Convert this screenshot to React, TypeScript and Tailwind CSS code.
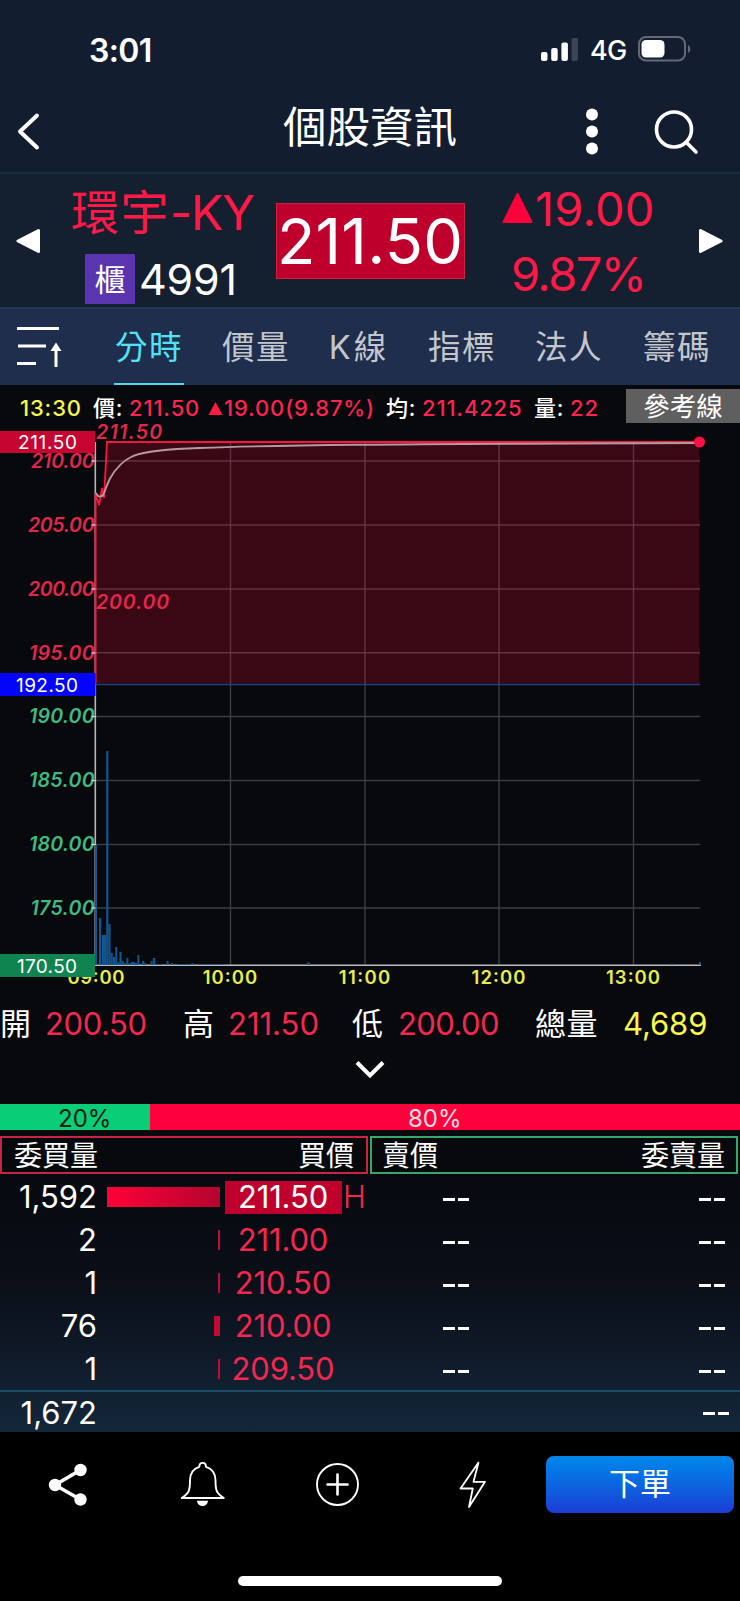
import { clsx } from "clsx";

const TABS = [
  { label: "分時", cell: "tracking-[1.5px]" },
  { label: "價量", cell: "ml-[37px] tracking-[1.5px]" },
  { label: "K線", cell: "ml-[33px] tracking-[3px]" },
  { label: "指標", cell: "ml-[33px] tracking-[1.5px]" },
  { label: "法人", cell: "ml-[37px] tracking-[1.5px]" },
  { label: "籌碼", cell: "ml-[38px] tracking-[1.5px]" },
];

const PRICE_TICKS = [
  { value: "210.00", y: 461, up: true, width: 64 },
  { value: "205.00", y: 525, up: true, width: 67 },
  { value: "200.00", y: 589, up: true, width: 67 },
  { value: "195.00", y: 653, up: true, width: 66 },
  { value: "190.00", y: 716.5, up: false, width: 66 },
  { value: "185.00", y: 780.5, up: false, width: 66 },
  { value: "180.00", y: 844.5, up: false, width: 66 },
  { value: "175.00", y: 908, up: false, width: 64.5 },
];

const TIME_TICKS = [
  { value: "09:00", x: 96, width: 57 },
  { value: "10:00", x: 230, width: 54.5 },
  { value: "11:00", x: 364.5, width: 51.5 },
  { value: "12:00", x: 498.5, width: 54 },
  { value: "13:00", x: 633, width: 54 },
];

// [x, width, top]
const VOLUME = [
  [95, 2, 845],
  [99, 2.2, 918],
  [101.8, 4.4, 935],
  [106.2, 2.2, 751],
  [108.4, 2.2, 924],
  [110.6, 2.2, 953],
  [113, 2, 957],
  [115.2, 2, 947],
  [117.4, 2, 962],
  [119.4, 2.2, 952],
  [121.8, 2, 961],
  [124.2, 2, 963],
  [126.4, 2, 958],
  [129, 1.6, 963],
  [131, 4, 962],
  [135, 2, 963],
  [137.4, 2, 955],
  [142, 2.2, 961],
  [144.2, 2, 963],
  [150.6, 2, 961],
  [152.8, 2.4, 958],
  [156, 6, 964],
  [166.6, 2, 961],
  [171, 2, 963],
  [177, 14, 964],
  [191.4, 2, 963],
  [198, 26, 964.4],
  [307, 3, 962.5],
  [671, 2, 963.5],
  [699, 2, 962],
];

const BIDS = [
  { qty: "1,592", price: "211.50", bar: "w-[113px]", last: true },
  { qty: "2", price: "211.00", bar: "w-[2px]" },
  { qty: "1", price: "210.50", bar: "w-[2px]" },
  { qty: "76", price: "210.00", bar: "w-[6px]" },
  { qty: "1", price: "209.50", bar: "w-[2px]" },
];

function StatusBar() {
  return (
    <div className="flex h-[98px] items-center pl-[89px]">
      <span className="w-[452px] pt-[3px] text-[32px] leading-none font-semibold tracking-[-0.6px]">3:01</span>
      <svg className="h-[26px] w-[38px]" viewBox="0 0 38 26" fill="#fff">
        <rect x="0" y="16" width="6.5" height="9" rx="2" />
        <rect x="10.2" y="12" width="6.5" height="13" rx="2" />
        <rect x="20.400" y="6.500" width="6.500" height="18.500" rx="2" />
        <rect x="30.500" y="2" width="6.500" height="23" rx="2" fill="#3b4556" />
      </svg>
      <span className="ml-[11px] w-[48px] pt-[3px] text-[27px] leading-none font-medium tracking-[-0.8px]">4G</span>
      <svg className="h-[26px] w-[54px]" viewBox="0 0 54 26">
        <rect x="1" y="1" width="46" height="23.5" rx="7" fill="none" stroke="#626a78" strokeWidth="2" />
        <rect x="3.5" y="4" width="23" height="17.5" rx="4.5" fill="#fff" />
        <path d="M50 9c3 1.300 3 6.700 0 8z" fill="#626a78" />
      </svg>
    </div>
  );
}

function TitleBar() {
  return (
    <header className="flex h-[76px] items-center border-b-2 border-[#12303f] pb-[9px]">
      <svg className="ml-[14px] h-[44px] w-[30px]" viewBox="0 0 30 44" fill="none" stroke="#fff" strokeWidth="4" strokeLinecap="round" strokeLinejoin="round">
        <path d="M23 6.500 6 22.500 23 38.500" />
      </svg>
      <h1 className="ml-[239px] w-[179px] pb-[5px] text-[43.5px] leading-none">個股資訊</h1>
      <svg className="ml-[124px] h-[50px] w-[12px]" viewBox="0 0 12 50" fill="#fff">
        <circle cx="6" cy="8.500" r="6" />
        <circle cx="6" cy="25.500" r="6" />
        <circle cx="6" cy="42.500" r="6" />
      </svg>
      <svg className="ml-[55px] h-[48px] w-[48px]" viewBox="0 0 48 48" fill="none" stroke="#fff" strokeWidth="3.6" strokeLinecap="round">
        <circle cx="21" cy="22.500" r="17.500" />
        <path d="M33.500 35.500 43 45" />
      </svg>
    </header>
  );
}

function StockHeader() {
  return (
    <section className="flex h-[133px] bg-[#141f30] text-[#ff1945]">
      <svg className="mt-[54px] ml-[16px] h-[26px] w-[25px]" viewBox="0 0 25 26" fill="#fff" stroke="#fff" strokeWidth="3" strokeLinejoin="round">
        <path d="M2 13 22.500 2.500V23.500z" />
      </svg>
      <div className="ml-[29px] w-[206px]">
        <div className="mt-[13px] h-[54px] pl-[1px] text-[48px] leading-[52px] tracking-[1.500px] whitespace-nowrap">
          環宇<span className="tracking-[-1px]">-KY</span>
        </div>
        <div className="mt-[13px] flex items-center pl-[15px] text-white">
          <span className="flex size-[50px] items-center justify-center bg-[#5b34b0] text-[31px] leading-none">櫃</span>
          <span className="ml-[4px] text-[43px] leading-[50px] tracking-[-0.2px]">4991</span>
        </div>
      </div>
      <div className="mt-[29px] flex h-[76px] w-[189px] items-center justify-center border border-[#d02040] bg-[#c0002c] pr-[1px] text-[63px] leading-none tracking-[0.2px] text-white">
        211.50
      </div>
      <div className="ml-[37px] flex w-[160px] flex-col">
        <div className="mt-[6px] flex h-[56px] items-center">
          <svg className="mr-[2px] h-[32px] w-[31px]" viewBox="0 0 31 32" fill="#ff003c" stroke="#ff003c" strokeWidth="2" strokeLinejoin="round">
            <path d="M15.500 2 29.500 30h-28z" />
          </svg>
          <span className="text-[47px] leading-none tracking-[0.2px]">19.00</span>
        </div>
        <div className="mt-[10px] pl-[9px] text-[47px] leading-[56px] tracking-[-1.6px]">9.87%</div>
      </div>
      <svg className="mt-[54px] ml-[36px] h-[26px] w-[25px]" viewBox="0 0 25 26" fill="#fff" stroke="#fff" strokeWidth="3" strokeLinejoin="round">
        <path d="M23 13 2.500 2.500V23.500z" />
      </svg>
    </section>
  );
}

function Tabs() {
  return (
    <nav className="flex h-[78px] border-t-2 border-[#193a55] bg-[#202e4d]">
      <svg className="mt-[14px] ml-[16px] h-[48px] w-[48px]" viewBox="0 0 48 48" fill="none" stroke="#fff" strokeWidth="3">
        <path d="M1 5.500h42M2 23h28M1 40.500h19M40 44V26" />
        <path d="M40 19.500 34.500 28h11z" fill="#fff" stroke="none" />
      </svg>
      <ul className="ml-[50px] flex">
        {TABS.map((tab, i) => (
          <li
            key={tab.label}
            className={clsx(
              "flex h-[76px] w-[70px] items-center justify-center border-b-2 pt-[4px] text-[32.5px] whitespace-nowrap",
              tab.cell,
              i === 0 ? "border-[#56d8f2] text-[#4fe3f5]" : "border-transparent text-[#c3c7cc]",
            )}
          >
            {tab.label}
          </li>
        ))}
      </ul>
    </nav>
  );
}

function QuoteLine() {
  return (
    <div className="flex h-[40px] items-start text-[22px] leading-[30px] font-medium tracking-[0.85px] whitespace-nowrap text-[#ff2350]">
      <span className="mt-[8px] ml-[20px] w-[73px] text-[#f4f84a]">13:30</span>
      <span className="mt-[8px] w-[36px] text-white">價:</span>
      <span className="mt-[8px] w-[79px]">211.50</span>
      <svg className="mt-[16px] h-[15px] w-[15px]" viewBox="0 0 15 15" fill="#ff1945">
        <path d="M7.500 1 14.500 14H.5z" />
      </svg>
      <span className="mt-[8px] ml-[1px] w-[162px]">19.00(9.87%)</span>
      <span className="mt-[8px] w-[36px] text-white">均:</span>
      <span className="mt-[8px] w-[112px]">211.4225</span>
      <span className="mt-[8px] w-[36px] text-white">量:</span>
      <span className="mt-[8px]">22</span>
      <button className="mt-[4px] ml-auto h-[34px] w-[114px] bg-[#5f5f60] text-[26.500px] leading-[33px] font-normal tracking-normal text-white">
        參考線
      </button>
    </div>
  );
}

function Chart() {
  return (
    <svg className="block h-[567px] w-[740px] overflow-visible" viewBox="0 425 740 567" fontSize="19.500">
      <path d="M95.500 683.500V493l3.500 12 3-17 2 10 3-56h592.500v241.500z" fill="#3a0715" />
      <path
        d="M95.500 461H700M95.500 525H700M95.500 589H700M95.500 652.800H700M230.500 442V684M365 442V684M499 442V684M633.500 442V684"
        stroke="#603541"
        strokeWidth="1.400"
      />
      <path
        d="M95.500 716.500H700M95.500 780.500H700M95.500 844.500H700M95.500 908H700M230.500 684V965M365 684V965M499 684V965M633.500 684V965"
        stroke="#3c3e42"
        strokeWidth="1.400"
      />
      <path d="M95.500 965.300H701" stroke="#b9bcc0" strokeWidth="1.400" />
      <path d="M95.300 442V966" stroke="#b5b5b7" strokeWidth="1.600" />
      {VOLUME.map(([x, w, top]) => (
        <rect key={x} x={x} y={top} width={w} height={965 - top} fill="#12568f" />
      ))}
      <path d="M95.500 684.500H700" stroke="#213f80" strokeWidth="1.500" />
      <path d="M95.500 683V493l3.500 12 3-17 2 10 3-56h592" fill="none" stroke="#ff1440" strokeWidth="1.800" />
      <path
        d="M95.500 493c2 1 2 3.500 4 3.500s3 0 4-2c2-5 3-9 6.500-16 5-9 11-17 23-22.500 14-5.500 40-7.300 67-8 80-3 170-4 499.500-5"
        fill="none"
        stroke="#b59a9f"
        strokeWidth="1.900"
      />
      <circle cx="699.500" cy="442" r="5.500" fill="#ff0f42" />

      {PRICE_TICKS.map((tick) => (
        <g key={tick.value}>
          <text
            x={95 - tick.width}
            y={tick.y + 6.8}
            textLength={tick.width - 0.5}
            fontStyle="italic"
            fontWeight="600"
            fill={tick.up ? "#e3264c" : "#3fb981"}
          >
            {tick.value}
          </text>
          <path d={`M91.500 ${tick.y}h4`} stroke="#d8d8d8" strokeWidth="1.200" />
        </g>
      ))}
      <g fontStyle="italic" fontWeight="600" fill="#e3264c">
        <text x="96" y="439" textLength="66">211.50</text>
        <text x="96" y="608.500" textLength="73">200.00</text>
      </g>

      <g fontWeight="600" fill="#e6ed4e">
        {TIME_TICKS.map((tick) => (
          <text key={tick.value} x={tick.x - tick.width / 2} y="983.500" textLength={tick.width} fontSize="18.500">
            {tick.value}
          </text>
        ))}
      </g>

      <path d="M0 431H95V453H0z" fill="#c50631" />
      <path d="M0 673H95.500V696H0z" fill="#0404fb" />
      <path d="M0 954H95V977H0z" fill="#0f8450" />
      <g fill="#fff" fontSize="19">
        <text x="18" y="449.300" textLength="59">211.50</text>
        <text x="16" y="691.800" textLength="62">192.50</text>
        <text x="17" y="972.800" textLength="60">170.50</text>
      </g>
    </svg>
  );
}

function DayStats() {
  return (
    <div className="flex h-[62px] items-center text-[31px] leading-none tracking-[-0.4px] whitespace-nowrap text-[#f32750]">
      <span className="w-[45px] text-white">開</span>
      <span className="w-[138px]">200.50</span>
      <span className="w-[45px] text-white">高</span>
      <span className="w-[124px] tracking-normal">211.50</span>
      <span className="w-[46px] text-white">低</span>
      <span className="w-[137px] tracking-[-0.6px]">200.00</span>
      <span className="w-[88px] tracking-[0.5px] text-white">總量</span>
      <span className="tracking-[-0.1px] text-[#fbf74b]">4,689</span>
    </div>
  );
}

function OrderBook() {
  return (
    <section className="flex h-[258px] flex-col bg-linear-to-b from-[#07090f] via-[#0a0e17] via-40% to-[#13273a] text-[31px] leading-none">
      <div className="h-[2px]" />
      {BIDS.map((bid) => (
        <div key={bid.price} className="flex h-[42.8px] items-center">
          <span className="w-[97px] pb-[1px] text-right">{bid.qty}</span>
          <span className="flex w-[122.500px] justify-end">
            <span
              className={clsx(
                "h-[20px]",
                bid.bar,
                bid.last ? "bg-linear-to-r from-[#ff0038] to-[#b5042d]" : "bg-[#c20a33]",
              )}
            />
          </span>
          <span
            className={clsx(
              "ml-[5.500px] flex h-[33px] w-[117px] items-center justify-center pr-[1px] pb-[1px] tracking-[-0.15px]",
              bid.last ? "bg-[#c0002c] text-white" : "text-[#f32750]",
            )}
          >
            {bid.price}
          </span>
          <span className="w-[101px] pb-[1px] pl-[1px] font-light text-[#f32750]">{bid.last ? "H" : ""}</span>
          <span className="flex gap-[3px] pt-[5px]">
            <i className="h-[3px] w-[11.500px] bg-white" />
            <i className="h-[3px] w-[11.500px] bg-white" />
          </span>
          <span className="ml-auto flex gap-[3px] pt-[5px] pr-[15px]">
            <i className="h-[3px] w-[11.500px] bg-white" />
            <i className="h-[3px] w-[11.500px] bg-white" />
          </span>
        </div>
      ))}
      <div className="flex flex-1 items-center border-t-2 border-[#1c4b66]">
        <span className="w-[97px] pt-[1px] text-right">1,672</span>
        <span className="ml-auto flex gap-[3px] pt-[4px] pr-[11px]">
          <i className="h-[3px] w-[11.500px] bg-white" />
          <i className="h-[3px] w-[11.500px] bg-white" />
        </span>
      </div>
    </section>
  );
}

function BottomBar() {
  return (
    <footer className="flex h-[169px] flex-col bg-black">
      <div className="flex h-[105px] items-center">
        <svg className="ml-[46px] h-[50px] w-[44px]" viewBox="0 0 44 50" fill="#fff">
          <path d="M34.500 10 9 25 34.500 39.500" fill="none" stroke="#fff" strokeWidth="3.600" />
          <circle cx="34.500" cy="10" r="6.200" />
          <circle cx="9" cy="25" r="6.200" />
          <circle cx="34.500" cy="39.500" r="6.200" />
        </svg>
        <svg className="ml-[89px] h-[50px] w-[48px]" viewBox="0 0 48 50" fill="none" stroke="#fff" strokeWidth="1.900" strokeLinejoin="round">
          <path d="M20.300 6.800C20.300 1.500 27 1.500 27 6.800c6.500 2 9.500 6 9.500 13.500 0 9.500.5 12.500 8.300 17.700H2.700C10.500 32.800 11 29.800 11 20.300c0-7.500 2.800-11.500 9.300-13.500z" />
          <path d="M18 40.800h11c-.5 7-10.500 7-11 0z" fill="#fff" stroke="none" />
        </svg>
        <svg className="ml-[88px] h-[46px] w-[46px]" viewBox="0 0 46 46" fill="none" stroke="#fff" strokeWidth="1.900">
          <circle cx="22.500" cy="22.500" r="20.500" />
          <path d="M12.500 22.500h20M22.500 12.500v20" strokeWidth="2.600" strokeLinecap="round" />
        </svg>
        <svg className="ml-[96px] h-[48px] w-[32px]" viewBox="0 0 32 48" fill="none" stroke="#fff" strokeWidth="1.800" strokeLinejoin="round">
          <path d="M21.500 1.500 3.500 27.500h12.300L12 46 28 20.800H16.500z" />
        </svg>
        <button className="mr-[6px] ml-auto h-[57px] w-[188px] rounded-[8px] bg-linear-to-b from-[#0288ea] to-[#1b3bd5] pb-[2px] text-[31px] leading-none text-white">
          下單
        </button>
      </div>
      <div className="mx-auto mt-auto mb-[15px] h-[10px] w-[264px] rounded-full bg-white" />
    </footer>
  );
}

export default function App() {
  return (
    <div className="flex h-[1601px] w-[740px] flex-col overflow-hidden bg-[#07090d] font-[Inter,'Noto_Sans_CJK_TC',sans-serif] text-white">
      <div className="bg-[#131d30]">
        <StatusBar />
        <TitleBar />
      </div>
      <StockHeader />
      <Tabs />
      <QuoteLine />
      <Chart />
      <DayStats />
      <div className="flex h-[50px] justify-center">
        <svg className="mt-[6px] h-[20px] w-[30px]" viewBox="0 0 30 20" fill="none" stroke="#fff" strokeWidth="4">
          <path d="M2 2.500 15 15.500 28 2.500" />
        </svg>
      </div>
      <div className="flex h-[26px] text-[24px] leading-[29px]">
        <div className="w-[150px] bg-[#09cd77] pl-[58px] text-[#04200f]">20%</div>
        <div className="flex-1 bg-[#ff003c] pl-[258px] text-[#ffdfe5]">80%</div>
      </div>
      <div className="mt-[6px] flex gap-[2px] text-[28px] leading-none">
        <div className="flex h-[38px] w-[368px] items-center justify-between border-2 border-[#c92444] pt-[2px] pr-[12px] pl-[12px]">
          <span>委買量</span>
          <span>買價</span>
        </div>
        <div className="flex h-[38px] w-[368px] items-center justify-between border-2 border-[#36a86c] pt-[2px] pr-[11px] pl-[10px]">
          <span>賣價</span>
          <span>委賣量</span>
        </div>
      </div>
      <OrderBook />
      <BottomBar />
    </div>
  );
}
